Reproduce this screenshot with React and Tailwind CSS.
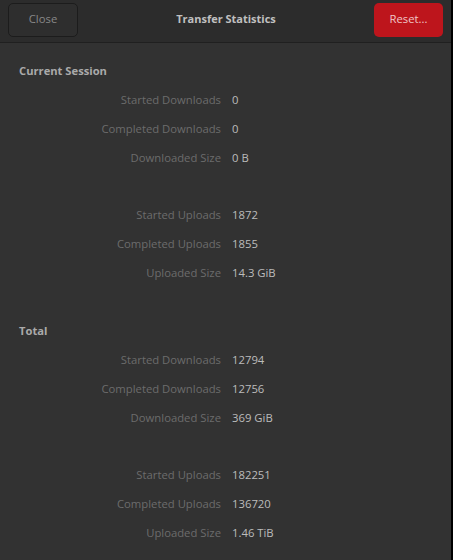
import React from "react";

const font = { fontFamily: '"Open Sans", "Noto Sans", sans-serif' };

function Row({ label, value }) {
  return (
    <div className="flex h-[29px] items-center">
      <div className="w-[221px] shrink-0 text-right text-[11.3px] text-[#6c6c6c]">{label}</div>
      <div className="pl-[11px] text-[11.3px] text-[#bcbcbc]">{value}</div>
    </div>
  );
}

function Heading({ children }) {
  return (
    <div className="flex h-[29px] items-center pl-[19px] text-[11.2px] font-bold text-[#aaaaaa]">
      {children}
    </div>
  );
}

export default function App() {
  return (
    <div className="flex h-[560px] w-[453px] bg-black" style={font}>
      <div className="flex w-[451px] flex-col bg-[#323232]">
        <div className="flex h-[43px] shrink-0 items-center justify-between border-b border-[#202020] bg-[#2c2c2c] px-[8px] pb-[3px]">
          <button className="flex h-[34px] w-[70px] items-center justify-center rounded-[5px] border border-[#1c1c1c] bg-[#2e2e2e] text-[11.3px] text-[#888888]">
            Close
          </button>
          <div className="text-[11px] font-bold text-[#c0c0c0]">Transfer Statistics</div>
          <button className="flex h-[34px] w-[69px] items-center justify-center rounded-[5px] bg-[#bd151c] text-[11.3px] text-[#efc6c6]">
            Reset...
          </button>
        </div>
        <div className="flex flex-col pt-[14px]">
          <Heading>Current Session</Heading>
          <Row label="Started Downloads" value="0" />
          <Row label="Completed Downloads" value="0" />
          <Row label="Downloaded Size" value="0 B" />
          <div className="h-[28px]" />
          <Row label="Started Uploads" value="1872" />
          <Row label="Completed Uploads" value="1855" />
          <Row label="Uploaded Size" value="14.3 GiB" />
          <div className="h-[29px]" />
          <Heading>Total</Heading>
          <Row label="Started Downloads" value="12794" />
          <Row label="Completed Downloads" value="12756" />
          <Row label="Downloaded Size" value="369 GiB" />
          <div className="h-[28px]" />
          <Row label="Started Uploads" value="182251" />
          <Row label="Completed Uploads" value="136720" />
          <Row label="Uploaded Size" value="1.46 TiB" />
        </div>
      </div>
    </div>
  );
}
